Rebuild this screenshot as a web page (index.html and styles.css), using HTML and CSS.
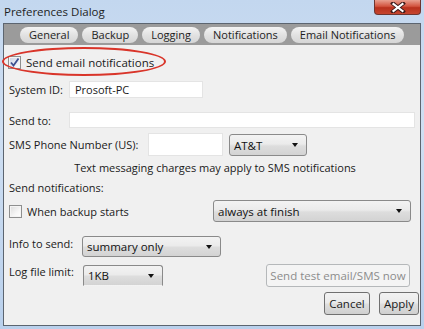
FILE: index.html
```html
<!DOCTYPE html>
<html>
<head>
<meta charset="utf-8">
<link rel="stylesheet" href="styles.css">
</head>
<body>
<div class="window">
  <div class="titlebar">
    <span class="title">Preferences Dialog</span>
    <div class="close">
      <svg width="16" height="11" viewBox="0 0 16 11"><path d="M3 1.5 L13 9.5 M13 1.5 L3 9.5" stroke="#3a1a1a" stroke-width="4" stroke-linecap="square"/><path d="M3.5 2 L12.5 9 M12.5 2 L3.5 9" stroke="#ffffff" stroke-width="2.2" stroke-linecap="square"/></svg>
    </div>
  </div>
  <div class="frame">
    <div class="tabbar">
      <span class="tab">General</span>
      <span class="tab">Backup</span>
      <span class="tab">Logging</span>
      <span class="tab">Notifications</span>
      <span class="tab">Email Notifications</span>
    </div>
    <div class="content">
      <div class="row r1">
        <span class="cb checked"><svg width="11" height="11" viewBox="0 0 11 11"><path d="M2 5.5 L4.5 8.5 L9.5 1.5" fill="none" stroke="#3d4f8f" stroke-width="1.8"/></svg></span>
        <span class="cb-label">Send email notifications</span>
        <div class="ellipse"></div>
      </div>
      <div class="row r2">
        <span class="lbl lbl-id">System ID:</span>
        <span class="field f-id">Prosoft-PC</span>
      </div>
      <div class="row r3">
        <span class="lbl lbl-id">Send to:</span>
        <span class="field f-to"></span>
      </div>
      <div class="row r4">
        <span class="lbl lbl-sms">SMS Phone Number (US):</span>
        <span class="field f-phone"></span>
        <span class="select s-carrier">AT&amp;T<i class="arrow"></i></span>
      </div>
      <div class="row r5 note">Text messaging charges may apply to SMS notifications</div>
      <div class="row r6">Send notifications:</div>
      <div class="row r7">
        <span class="cb"></span>
        <span class="cb-label">When backup starts</span>
        <span class="select s-when">always at finish<i class="arrow"></i></span>
      </div>
      <div class="row r8">
        <span class="lbl lbl-info">Info to send:</span>
        <span class="select s-info">summary only<i class="arrow"></i></span>
      </div>
      <div class="row r9">
        <span class="lbl lbl-log">Log file limit:</span>
        <span class="select s-log">1KB<i class="arrow"></i></span>
        <span class="btn btn-test">Send test email/SMS now</span>
      </div>
      <div class="row r10">
        <span class="btn btn-cancel">Cancel</span>
        <span class="btn btn-apply">Apply</span>
      </div>
    </div>
  </div>
</div>
</body>
</html>
```
FILE: styles.css
```css
* { box-sizing: border-box; }
html, body { margin: 0; padding: 0; }
body {
  width: 424px;
  height: 329px;
  overflow: hidden;
  font-family: "Open Sans", "Noto Sans", sans-serif;
  font-size: 11px;
  color: #1a1a1a;
}
.window {
  width: 424px;
  height: 329px;
  background: linear-gradient(180deg, #c3d7ef 0%, #cfdff2 40%, #b9d0ec 100%);
  padding: 0 3px 3px 3px;
  display: flex;
  flex-direction: column;
}
.titlebar {
  height: 23px;
  display: flex;
  align-items: center;
  position: relative;
}
.title {
  font-size: 11.5px;
  color: #1e1e1e;
  margin-left: 1px;
  margin-top: -1px;
}
.close {
  position: absolute;
  right: 0;
  top: 0;
  width: 47px;
  height: 15px;
  border: 1px solid #6e3530;
  border-top: none;
  border-radius: 0 0 4px 4px;
  background: linear-gradient(180deg, #e8a090 0%, #d2543f 45%, #b8311d 55%, #c6452f 100%);
  display: flex;
  align-items: center;
  justify-content: center;
}
.frame {
  flex: 1;
  border: 1px solid #5c6570;
  display: flex;
  flex-direction: column;
  background: #f0f0f0;
}
.tabbar {
  height: 21px;
  background: #9b9b9b;
  display: flex;
  align-items: center;
  padding-left: 16px;
  gap: 4px;
}
.tab {
  height: 16px;
  line-height: 15px;
  padding: 0 9px;
  border-radius: 8px;
  background: linear-gradient(180deg, #f4f4f4 0%, #e2e2e2 50%, #d6d6d6 100%);
  color: #1e1e1e;
  font-size: 11px;
}
.content {
  flex: 1;
  display: flex;
  flex-direction: column;
  padding: 0 0 0 5px;
  position: relative;
}
.row {
  display: flex;
  align-items: center;
  position: relative;
}
.r1 { margin-top: 10px; height: 15px; }
.r2 { margin-top: 11px; height: 17px; }
.r3 { margin-top: 14px; height: 16px; }
.r4 { margin-top: 5px; height: 23px; }
.r5 { margin-top: 4px; height: 14px; }
.r6 { margin-top: 6px; height: 14px; }
.r7 { margin-top: 6px; height: 22px; }
.r8 { margin-top: 14px; height: 21px; align-items: flex-start; }
.r9 { margin-top: 7px; height: 23px; align-items: flex-start; }
.r10 { margin-top: 5px; height: 23px; justify-content: flex-end; padding-right: 1px; gap: 9px; }

.cb {
  width: 13px;
  height: 13px;
  border: 1px solid #8e8f8f;
  background: linear-gradient(135deg, #dcdcdc 0%, #f6f6f6 60%, #ffffff 100%);
  box-shadow: inset 0 0 0 1px #f4f4f4;
  display: flex;
  align-items: center;
  justify-content: center;
  flex: none;
}
.r1 .cb { margin-left: -1px; }
.cb.checked { background: linear-gradient(135deg, #cbd3e3 0%, #eef1f8 70%, #ffffff 100%); }
.cb-label { margin-left: 5px; }
.r1 .cb-label { font-size: 11.5px; }

.ellipse {
  position: absolute;
  left: -7px;
  top: -8px;
  width: 164px;
  height: 29px;
  border: 2px solid #d9352a;
  border-radius: 50%;
}

.lbl { flex: none; }
.lbl-id { width: 60px; }
.lbl-sms { width: 139px; }
.lbl-info { width: 73px; }
.lbl-log { width: 74px; }

.field {
  background: #ffffff;
  border: 1px solid #e4e4e4;
  height: 100%;
  display: flex;
  align-items: center;
  padding-left: 5px;
}
.f-id { width: 134px; }
.f-to { width: 346px; }
.f-phone { width: 75px; }

.select {
  position: relative;
  display: flex;
  align-items: center;
  padding-left: 4px;
  border: 1px solid #8a8a8a;
  border-radius: 3px;
  background: linear-gradient(180deg, #f3f3f3 0%, #ebebeb 45%, #dddddd 55%, #d3d3d3 100%);
  color: #111;
  font-size: 11.5px;
}
.arrow {
  position: absolute;
  right: 8px;
  top: 50%;
  margin-top: -2px;
  width: 0;
  height: 0;
  border-left: 3.5px solid transparent;
  border-right: 3.5px solid transparent;
  border-top: 4px solid #111;
}
.s-carrier { width: 78px; height: 22px; margin-left: 6px; margin-top: 1px; }
.s-when { width: 198px; height: 22px; margin-left: auto; margin-right: 9px; }
.s-info { width: 139px; height: 21px; }
.s-log { width: 80px; height: 21px; margin-top: 1px; border-bottom-color: transparent; border-radius: 3px 3px 0 0; }

.note { justify-content: center; padding-left: 1px; }

.btn {
  display: flex;
  align-items: center;
  justify-content: center;
  border: 1px solid #707070;
  border-radius: 3px;
  background: linear-gradient(180deg, #f2f2f2 0%, #ebebeb 45%, #dddddd 55%, #cfcfcf 100%);
  height: 23px;
  font-size: 11.5px;
}
.btn-test {
  margin-left: auto;
  margin-right: 10px;
  width: 144px;
  background: #f4f4f4;
  border-color: #b5b8ba;
  color: #8c8c8c;
}
.btn-cancel { width: 46px; }
.btn-apply { width: 40px; }
```
